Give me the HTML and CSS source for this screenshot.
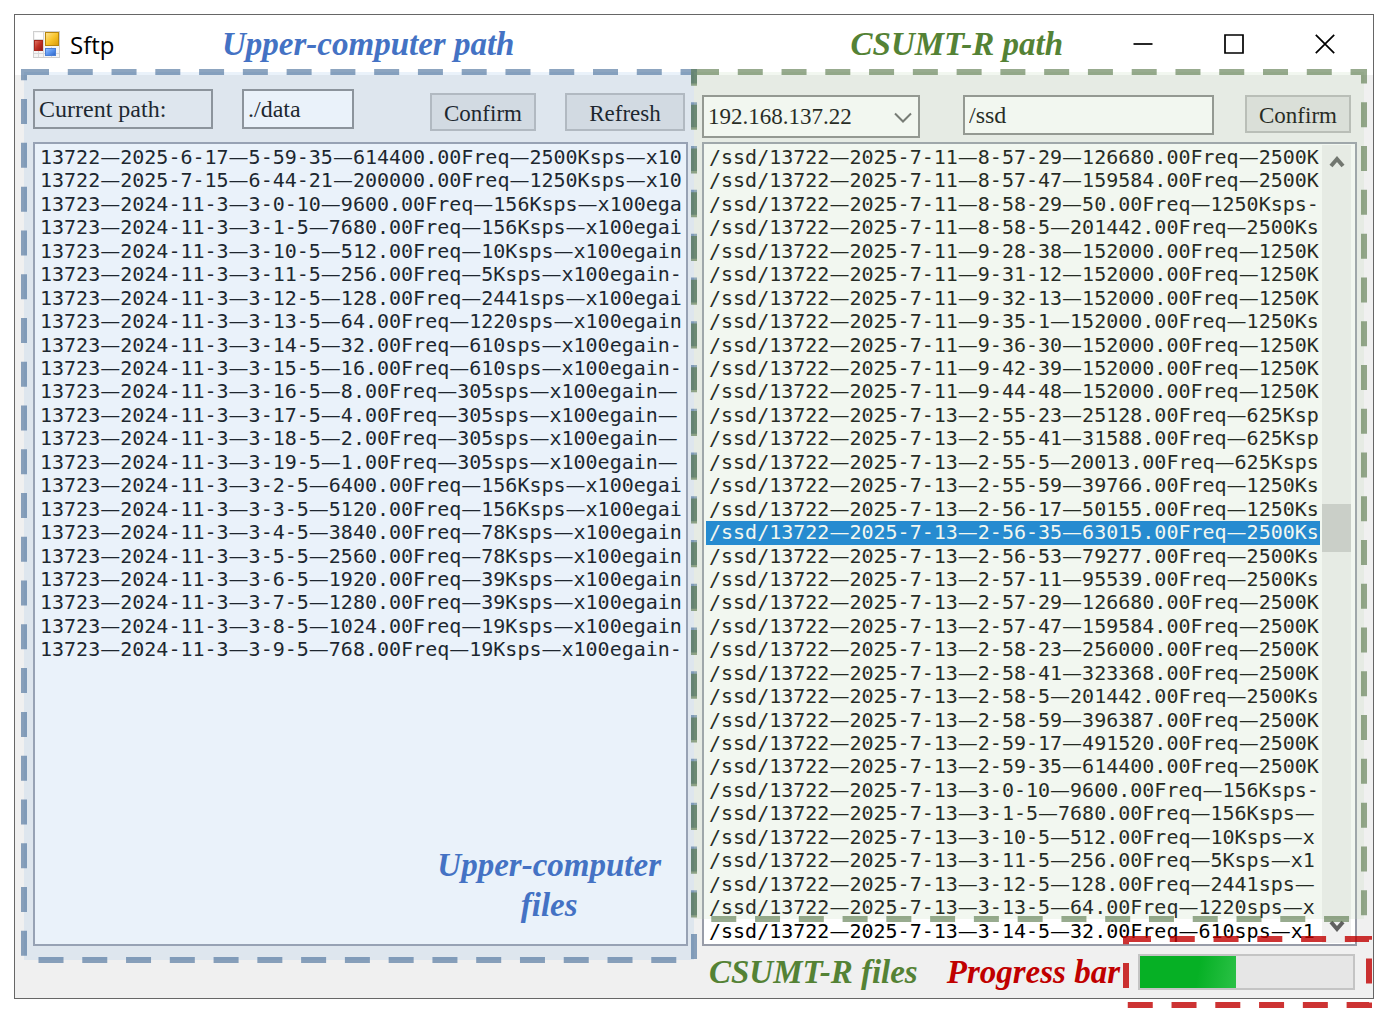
FILE: index.html
```html
<!DOCTYPE html>
<html lang="en">
<head>
<meta charset="utf-8">
<title>Sftp</title>
<link rel="stylesheet" href="styles.css">
</head>
<body>
<div class="window">
  <header class="titlebar">
    <svg class="app-icon" viewBox="0 0 27 27" aria-hidden="true">
      <defs>
        <linearGradient id="gold" x1="0" y1="0" x2="1" y2="1"><stop offset="0" stop-color="#ffe69a"/><stop offset=".5" stop-color="#f8c52c"/><stop offset="1" stop-color="#d99a08"/></linearGradient>
        <linearGradient id="ruby" x1="0" y1="0" x2="1" y2="1"><stop offset="0" stop-color="#e27a68"/><stop offset=".5" stop-color="#c03024"/><stop offset="1" stop-color="#8e1713"/></linearGradient>
        <linearGradient id="azure" x1="0" y1="0" x2="1" y2="1"><stop offset="0" stop-color="#9cc5ff"/><stop offset=".5" stop-color="#5b95ee"/><stop offset="1" stop-color="#2d63c4"/></linearGradient>
      </defs>
      <rect x=".5" y=".5" width="26" height="26" fill="#f4f4f4" stroke="#cfcfcf"/>
      <path d="M10.500 1v25M18.500 16v10M1 8.500h10M1 18.500h10M5.500 18v8M1 22.500h25" stroke="#d8d8d8" fill="none"/>
      <rect x="2" y="2" width="8" height="6" fill="#fff"/>
      <rect x="1.500" y="9.500" width="8" height="10" fill="url(#ruby)" stroke="#a5281e"/>
      <rect x="12.500" y="1.500" width="13" height="13" fill="url(#gold)" stroke="#b8860b"/>
      <rect x="12.500" y="17.500" width="10" height="7" fill="url(#azure)" stroke="#4a7fd6"/>
    </svg>
    <h1 class="app-name">Sftp</h1>
    <span class="note note-blue note-local-path">Upper-computer path</span>
    <span class="note note-green note-remote-path">CSUMT-R path</span>
    <div class="window-buttons">
      <button type="button" class="window-button" aria-label="Minimize"><svg viewBox="0 0 20 20"><path d="M0.500 10h19"/></svg></button>
      <button type="button" class="window-button" aria-label="Maximize"><svg viewBox="0 0 20 20"><path d="M1 1h18v18H1z"/></svg></button>
      <button type="button" class="window-button" aria-label="Close"><svg viewBox="0 0 20 20"><path d="M.8.800l18.400 18.400M19.200.800L.800 19.200"/></svg></button>
    </div>
  </header>

  <main class="panels">
    <section class="panel" aria-label="Upper-computer">
      <div class="toolbar toolbar-local">
        <input class="field field-caption" type="text" value="Current path:" readonly aria-label="Caption">
        <input class="field field-local" type="text" value="./data" aria-label="Current path">
        <button type="button" class="button button-first">Confirm</button>
        <button type="button" class="button button-wide">Refresh</button>
      </div>
      <div class="file-box">
        <ul class="files" id="local-files" role="listbox" aria-label="Upper-computer files"></ul>
      </div>
      <div class="region region-local"><svg><rect class="region-blue" width="100%" height="100%"/></svg></div>
      <span class="note note-blue note-local-files">Upper-computer<br>files</span>
    </section>

    <section class="panel" aria-label="CSUMT-R">
      <div class="toolbar toolbar-remote">
        <div class="host">
          <select class="host-select" aria-label="Host"><option>192.168.137.22</option></select>
          <svg class="host-arrow" viewBox="0 0 18 12"><path d="M1 1.500l8 8 8-8"/></svg>
        </div>
        <input class="field field-remote" type="text" value="/ssd" aria-label="CSUMT-R path">
        <button type="button" class="button">Confirm</button>
      </div>
      <div class="file-box">
        <ul class="files" id="remote-files" role="listbox" aria-label="CSUMT-R files"></ul>
        <div class="scrollbar">
          <svg class="scroll-arrow" viewBox="0 0 16 14"><path d="M2 11l6-7 6 7"/></svg>
          <div class="scroll-track"><div class="scroll-thumb"></div></div>
          <svg class="scroll-arrow" viewBox="0 0 16 14"><path d="M2 3l6 7 6-7"/></svg>
        </div>
      </div>
      <div class="region region-remote"><svg><rect class="region-green" width="100%" height="100%"/></svg></div>
    </section>
  </main>

  <footer class="statusbar">
    <div class="status">
      <span class="note note-green">CSUMT-R files</span>
      <label class="note note-red" for="transfer">Progress bar</label>
      <div class="transfer">
        <progress class="progress" id="transfer" value="45" max="100"></progress>
        <div class="region region-progress"><svg><rect class="region-red" width="100%" height="100%"/></svg></div>
      </div>
    </div>
  </footer>
</div>
<script src="files.js"></script>
</body>
</html>
```
FILE: styles.css
```css
* { box-sizing: border-box; }

body {
  margin: 0;
  min-height: 100vh;
  padding: 14px 14px 23px;
  display: flex;
  flex-direction: column;
  background: #fff;
  color: #000;
  font-family: "Liberation Serif", serif;
}

.window {
  flex: 1;
  display: flex;
  flex-direction: column;
  border: 1px solid #666;
  background: #f0f0f0;
}

/* Title bar */
.titlebar {
  display: flex;
  align-items: center;
  height: 60px;
  padding: 0 3px 2px 18px;
  background: #fff;
}
.app-icon { width: 27px; height: 27px; }
.app-name {
  margin: 0 0 0 10px;
  width: 152px;
  font: 24px "Open Sans", sans-serif;
}
.window-buttons { display: flex; margin-left: 34px; }
.window-button {
  width: 91px;
  height: 58px;
  padding: 0;
  border: 0;
  background: none;
}
.window-button svg {
  display: block;
  width: 20px;
  height: 20px;
  margin: auto;
  fill: none;
  stroke: #000;
  stroke-width: 1.7;
}

/* Annotations */
.note {
  font: italic bold 33px/40px "Liberation Serif", serif;
  white-space: nowrap;
}
.note-blue { color: #4472c4; }
.note-green { color: #548235; }
.note-red { color: #c00000; }
.note-remote-path { margin-left: auto; }
.note-local-files {
  position: absolute;
  right: 27px;
  bottom: 21px;
  text-align: center;
}

.region {
  position: absolute;
  pointer-events: none;
}
.region svg {
  display: block;
  width: 100%;
  height: 100%;
  overflow: visible;
}
.region rect {
  stroke-width: 6;
  stroke-dasharray: 25 18.77;
}
.region-local { inset: -3px -6px -14px -9px; }
.region-remote { inset: -3px -7px 27px -8px; }
.region-progress { inset: -15px -14px -15px -12px; }
.region-blue { fill: rgba(150, 190, 230, .2); stroke: rgba(65, 105, 150, .6); }
.region-green { fill: rgba(190, 215, 180, .2); stroke: rgba(84, 115, 68, .6); }
.region-red { fill: none; stroke: rgba(192, 0, 0, .8); }

/* Panels */
.panels {
  flex: 1;
  display: grid;
  grid-template-columns: 1fr 1fr;
  gap: 14px;
  padding: 0 16px 0 18px;
}
.panel {
  position: relative;
  display: flex;
  flex-direction: column;
  min-width: 0;
}
.toolbar {
  display: flex;
  height: 67px;
}
.toolbar-local {
  align-items: flex-start;
  gap: 29px;
  padding: 14px 3px 11px 0;
}
.toolbar-remote {
  align-items: flex-start;
  padding: 20px 6px 0 0;
}
.field {
  height: 40px;
  min-width: 0;
  padding: 0 4px;
  border: 2px solid #8a8a8a;
  background: #fff;
  color: #000;
  font: 24px "Liberation Serif", serif;
}
.field-caption { width: 180px; background: #f0f0f0; }
.field-local { width: 112px; }
.field-remote { flex: 1; margin: 0 31px 0 43px; }
.button {
  width: 106px;
  height: 38px;
  padding: 4px 0 0;
  border: 2px solid #b8b8b8;
  background: #e1e1e1;
  color: #000;
  font: 23px "Liberation Serif", serif;
}
.toolbar-local .button { align-self: flex-end; }
.button-first { margin-left: auto; }
.button-wide { width: 120px; }

.host { position: relative; width: 218px; }
.host-select {
  appearance: none;
  width: 100%;
  height: 43px;
  padding: 0 4px;
  border: 2px solid #8a8a8a;
  border-radius: 0;
  background: #fff;
  color: #000;
  font: 23px "Liberation Serif", serif;
}
.host-arrow {
  position: absolute;
  right: 8px;
  top: 17px;
  width: 18px;
  height: 12px;
  fill: none;
  stroke: #666;
  stroke-width: 2;
  pointer-events: none;
}

/* File lists */
.file-box {
  flex: 1;
  display: flex;
  border: 2px solid #989ca8;
  background: #fff;
}
.files {
  flex: 1;
  min-width: 0;
  display: grid;
  grid-template-rows: repeat(34, minmax(23px, 1fr));
  margin: 0;
  padding: 2px 0 1px 2px;
  list-style: none;
}
.file {
  padding-left: 3px;
  font: 20px/23px "DejaVu Sans Mono", monospace;
  white-space: nowrap;
}
.file[aria-selected="true"] { background: #0078d7; color: #fff; }
.dash { font: 20px/20px "DejaVu Sans", sans-serif; }

.scrollbar {
  display: flex;
  flex-direction: column;
  align-items: center;
  width: 29px;
  margin: 1px 4px 1px 2px;
  background: #f0f0f0;
}
.scroll-arrow {
  width: 16px;
  height: 14px;
  margin: 10px 0;
  fill: none;
  stroke: #606060;
  stroke-width: 4;
}
.scroll-track {
  flex: 1;
  display: flex;
  flex-direction: column;
  align-self: stretch;
}
.scroll-track::before { content: ""; flex: 324; }
.scroll-track::after { content: ""; flex: 356; }
.scroll-thumb { height: 48px; background: #cdcdcd; }

/* Status bar */
.statusbar {
  display: grid;
  grid-template-columns: 1fr 1fr;
  gap: 14px;
  height: 52px;
  padding: 0 16px 0 18px;
}
.status {
  grid-column: 2;
  display: flex;
  align-items: center;
  justify-content: flex-end;
  padding-right: 2px;
}
.note-red { margin: 0 18px 0 29px; }
.transfer {
  position: relative;
  width: 217px;
  height: 36px;
}
.progress {
  appearance: none;
  display: block;
  width: 100%;
  height: 100%;
  border: 2px solid #c4c4c4;
  background: #e6e6e6;
}
.progress::-webkit-progress-bar { background: #e6e6e6; }
.progress::-webkit-progress-value { background: linear-gradient(100deg, #06b025 60%, #2bc146); }
```
FILE: files.js
```js
const localFiles = [
  "13722—2025-6-17—5-59-35—614400.00Freq—2500Ksps—x10",
  "13722—2025-7-15—6-44-21—200000.00Freq—1250Ksps—x10",
  "13723—2024-11-3—3-0-10—9600.00Freq—156Ksps—x100ega",
  "13723—2024-11-3—3-1-5—7680.00Freq—156Ksps—x100egai",
  "13723—2024-11-3—3-10-5—512.00Freq—10Ksps—x100egain",
  "13723—2024-11-3—3-11-5—256.00Freq—5Ksps—x100egain-",
  "13723—2024-11-3—3-12-5—128.00Freq—2441sps—x100egai",
  "13723—2024-11-3—3-13-5—64.00Freq—1220sps—x100egain",
  "13723—2024-11-3—3-14-5—32.00Freq—610sps—x100egain-",
  "13723—2024-11-3—3-15-5—16.00Freq—610sps—x100egain-",
  "13723—2024-11-3—3-16-5—8.00Freq—305sps—x100egain—",
  "13723—2024-11-3—3-17-5—4.00Freq—305sps—x100egain—",
  "13723—2024-11-3—3-18-5—2.00Freq—305sps—x100egain—",
  "13723—2024-11-3—3-19-5—1.00Freq—305sps—x100egain—",
  "13723—2024-11-3—3-2-5—6400.00Freq—156Ksps—x100egai",
  "13723—2024-11-3—3-3-5—5120.00Freq—156Ksps—x100egai",
  "13723—2024-11-3—3-4-5—3840.00Freq—78Ksps—x100egain",
  "13723—2024-11-3—3-5-5—2560.00Freq—78Ksps—x100egain",
  "13723—2024-11-3—3-6-5—1920.00Freq—39Ksps—x100egain",
  "13723—2024-11-3—3-7-5—1280.00Freq—39Ksps—x100egain",
  "13723—2024-11-3—3-8-5—1024.00Freq—19Ksps—x100egain",
  "13723—2024-11-3—3-9-5—768.00Freq—19Ksps—x100egain-",
];

const remoteFiles = [
  "/ssd/13722—2025-7-11—8-57-29—126680.00Freq—2500K",
  "/ssd/13722—2025-7-11—8-57-47—159584.00Freq—2500K",
  "/ssd/13722—2025-7-11—8-58-29—50.00Freq—1250Ksps-",
  "/ssd/13722—2025-7-11—8-58-5—201442.00Freq—2500Ks",
  "/ssd/13722—2025-7-11—9-28-38—152000.00Freq—1250K",
  "/ssd/13722—2025-7-11—9-31-12—152000.00Freq—1250K",
  "/ssd/13722—2025-7-11—9-32-13—152000.00Freq—1250K",
  "/ssd/13722—2025-7-11—9-35-1—152000.00Freq—1250Ks",
  "/ssd/13722—2025-7-11—9-36-30—152000.00Freq—1250K",
  "/ssd/13722—2025-7-11—9-42-39—152000.00Freq—1250K",
  "/ssd/13722—2025-7-11—9-44-48—152000.00Freq—1250K",
  "/ssd/13722—2025-7-13—2-55-23—25128.00Freq—625Ksp",
  "/ssd/13722—2025-7-13—2-55-41—31588.00Freq—625Ksp",
  "/ssd/13722—2025-7-13—2-55-5—20013.00Freq—625Ksps",
  "/ssd/13722—2025-7-13—2-55-59—39766.00Freq—1250Ks",
  "/ssd/13722—2025-7-13—2-56-17—50155.00Freq—1250Ks",
  "/ssd/13722—2025-7-13—2-56-35—63015.00Freq—2500Ks",
  "/ssd/13722—2025-7-13—2-56-53—79277.00Freq—2500Ks",
  "/ssd/13722—2025-7-13—2-57-11—95539.00Freq—2500Ks",
  "/ssd/13722—2025-7-13—2-57-29—126680.00Freq—2500K",
  "/ssd/13722—2025-7-13—2-57-47—159584.00Freq—2500K",
  "/ssd/13722—2025-7-13—2-58-23—256000.00Freq—2500K",
  "/ssd/13722—2025-7-13—2-58-41—323368.00Freq—2500K",
  "/ssd/13722—2025-7-13—2-58-5—201442.00Freq—2500Ks",
  "/ssd/13722—2025-7-13—2-58-59—396387.00Freq—2500K",
  "/ssd/13722—2025-7-13—2-59-17—491520.00Freq—2500K",
  "/ssd/13722—2025-7-13—2-59-35—614400.00Freq—2500K",
  "/ssd/13722—2025-7-13—3-0-10—9600.00Freq—156Ksps-",
  "/ssd/13722—2025-7-13—3-1-5—7680.00Freq—156Ksps—",
  "/ssd/13722—2025-7-13—3-10-5—512.00Freq—10Ksps—x",
  "/ssd/13722—2025-7-13—3-11-5—256.00Freq—5Ksps—x1",
  "/ssd/13722—2025-7-13—3-12-5—128.00Freq—2441sps—",
  "/ssd/13722—2025-7-13—3-13-5—64.00Freq—1220sps—x",
  "/ssd/13722—2025-7-13—3-14-5—32.00Freq—610sps—x1",
];

function fillList(id, names, selected) {
  const list = document.getElementById(id);
  names.forEach((name, index) => {
    const row = document.createElement("li");
    row.className = "file";
    row.setAttribute("role", "option");
    row.setAttribute("aria-selected", String(index === selected));
    row.innerHTML = name.replace(/—/g, '<span class="dash">—</span>');
    list.append(row);
  });
}

fillList("local-files", localFiles, -1);
fillList("remote-files", remoteFiles, 16);
```
